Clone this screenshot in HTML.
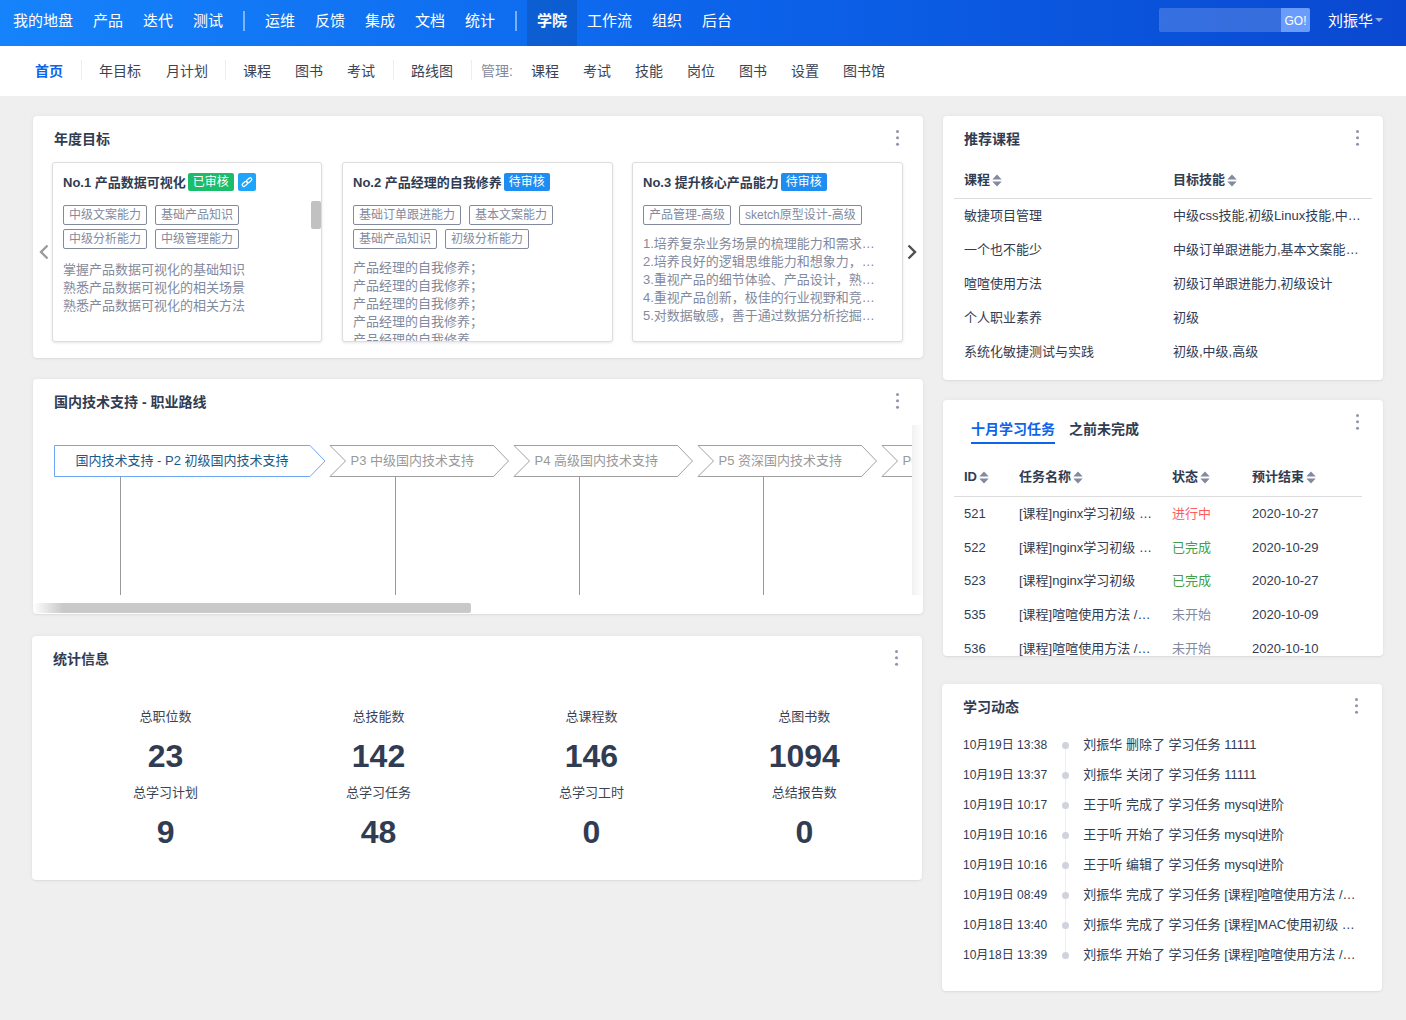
<!DOCTYPE html>
<html lang="zh-CN">
<head>
<meta charset="utf-8">
<title>学院 - 首页</title>
<style>
*{box-sizing:border-box;margin:0;padding:0}
html,body{width:1406px;height:1020px;overflow:hidden}
body{background:#efefef;font-family:"Liberation Sans","Noto Sans CJK SC",sans-serif;font-size:13px;color:#313c52;position:relative}
#topnav{position:absolute;left:0;top:0;width:1406px;height:46px;background:linear-gradient(90deg,#1583fb 0%,#0c64eb 50%,#0a48d1 100%);color:#fff;font-size:15px}
#topnav .it{position:absolute;top:0;height:46px;line-height:42px;padding:0 10px;white-space:nowrap}
#topnav .it.act{background:rgba(0,0,0,.12);font-weight:bold}
#topnav .dv{position:absolute;top:11px;width:2px;height:20px;background:rgba(255,255,255,.45)}
#search{position:absolute;left:1159px;top:8px;width:151px;height:24px;background:rgba(255,255,255,.18);border-radius:2px}
#search .go{position:absolute;right:0;top:0;width:29px;height:24px;background:#6a9cfb;color:#fff;font-size:12px;line-height:26px;text-align:center;border-radius:0 2px 2px 0}
#user{position:absolute;left:1328px;top:0;line-height:42px;font-size:15px;white-space:nowrap}
#user i{position:absolute;left:47px;top:18px;border:4px solid transparent;border-top:4px solid rgba(255,255,255,.55);width:0;height:0}
#subnav{position:absolute;left:0;top:46px;width:1406px;height:50px;background:#fff;font-size:14px;color:#3c4353}
#subnav .it{position:absolute;top:0;line-height:50px;white-space:nowrap}
#subnav .it.act{color:#0c64eb;font-weight:bold}
#subnav .lb{color:#838a9d}
#subnav .dv{position:absolute;top:14px;width:1px;height:20px;background:#eee}
.panel{position:absolute;background:#fff;border-radius:4px;box-shadow:0 1px 2px rgba(0,0,0,.06),0 0 5px rgba(0,0,0,.05)}
.panel .ttl{position:absolute;left:21px;top:13px;font-size:14px;font-weight:bold;line-height:20px;color:#313c52;white-space:nowrap}
.more{position:absolute;width:3.4px;height:3.4px;border-radius:50%;background:#9094ab;box-shadow:0 6.35px 0 #9094ab,0 12.7px 0 #9094ab}

.card{position:absolute;top:46px;width:270px;height:180px;border:1px solid #ddd;border-radius:3px;background:#fff;box-shadow:0 1px 3px rgba(0,0,0,.1);overflow:hidden}
.card .ct{position:absolute;left:10px;top:10px;font-size:13px;font-weight:bold;line-height:20px;white-space:nowrap;color:#313c52}
.badge{display:inline-block;vertical-align:top;height:18px;line-height:19px;margin-top:0px;padding:0 5px;font-size:12px;font-weight:normal;color:#fff;border-radius:2px;margin-left:2px}
.badge.g{background:#1bbd6a}
.badge.b{background:#1e8df2}
.badge.l{background:#1fa4fb;width:18px;padding:0;margin-left:4px;position:relative}
.tags{position:absolute;left:10px;top:42px;width:250px;font-size:0}
.tag{display:inline-block;height:20px;line-height:18px;border:1px solid #838a9d;border-radius:2px;padding:0 5px;font-size:12px;color:#838a9d;margin:0 8px 4px 0;white-space:nowrap}
.desc{position:absolute;left:10px;font-size:13px;line-height:18px;color:#838a9d;white-space:nowrap;width:232px}
.desc div{overflow:hidden;text-overflow:ellipsis}
.arw{position:absolute;top:127px}

.stat{position:absolute;width:200px;text-align:center;white-space:nowrap}
.stat .l{font-size:13px;line-height:20px;color:#3c4353}
.stat .n{font-size:32px;line-height:40px;font-weight:bold;color:#313c52}
.th{position:absolute;font-size:13px;font-weight:bold;line-height:20px;white-space:nowrap;color:#313c52}
.th svg{display:inline-block;vertical-align:top;margin:4px 0 0 2px}
.td{position:absolute;font-size:13px;line-height:20px;white-space:nowrap;overflow:hidden;text-overflow:ellipsis;color:#313c52}
.hr{position:absolute;height:1px;background:#ddd}
.tl-d{position:absolute;left:21px;font-size:12px;line-height:20px;white-space:nowrap;color:#313c52}
.tl-t{position:absolute;left:141.3px;width:273px;font-size:13px;line-height:20px;white-space:nowrap;overflow:hidden;text-overflow:ellipsis;color:#313c52}
.tl-o{position:absolute;left:120px;width:7px;height:7px;border-radius:50%;background:#d0d3de}
</style>
</head>
<body>
<div id="topnav">
<div class="it" style="left:3px">我的地盘</div>
<div class="it" style="left:83px">产品</div>
<div class="it" style="left:133px">迭代</div>
<div class="it" style="left:183px">测试</div>
<div class="dv" style="left:243px"></div>
<div class="it" style="left:255px">运维</div>
<div class="it" style="left:305px">反馈</div>
<div class="it" style="left:355px">集成</div>
<div class="it" style="left:405px">文档</div>
<div class="it" style="left:455px">统计</div>
<div class="dv" style="left:515px"></div>
<div class="it act" style="left:527px">学院</div>
<div class="it" style="left:577px">工作流</div>
<div class="it" style="left:642px">组织</div>
<div class="it" style="left:692px">后台</div>
<div id="search"><div class="go">GO!</div></div>
<div id="user">刘振华<i></i></div>
</div>
<div id="subnav">
<div class="it act" style="left:35px">首页</div>
<div class="dv" style="left:81px"></div>
<div class="it" style="left:99px">年目标</div>
<div class="it" style="left:166px">月计划</div>
<div class="dv" style="left:225px"></div>
<div class="it" style="left:243px">课程</div>
<div class="it" style="left:295px">图书</div>
<div class="it" style="left:347px">考试</div>
<div class="dv" style="left:393px"></div>
<div class="it" style="left:411px">路线图</div>
<div class="dv" style="left:471px"></div>
<div class="it lb" style="left:481px">管理:</div>
<div class="it" style="left:531px">课程</div>
<div class="it" style="left:583px">考试</div>
<div class="it" style="left:635px">技能</div>
<div class="it" style="left:687px">岗位</div>
<div class="it" style="left:739px">图书</div>
<div class="it" style="left:791px">设置</div>
<div class="it" style="left:843px">图书馆</div>
</div>

<div class="panel" id="p1" style="left:33px;top:116px;width:890px;height:242px"><div class="ttl">年度目标</div><div class="more" style="left:863.1px;top:14.1px"></div>
<svg class="arw" style="left:6px" width="10" height="18" viewBox="0 0 10 18"><path d="M8.5 2.5 L2 9 L8.5 15.5" fill="none" stroke="#9a9a9a" stroke-width="2.3"/></svg>
<svg class="arw" style="left:874px" width="10" height="18" viewBox="0 0 10 18"><path d="M1.5 2.5 L8 9 L1.5 15.5" fill="none" stroke="#505050" stroke-width="2.4"/></svg>
<div class="card" style="left:19px">
<div class="ct">No.1 产品数据可视化<span class="badge g">已审核</span><span class="badge l"><svg width="18" height="18" viewBox="0 0 18 18" style="position:absolute;left:0;top:0"><g fill="none" stroke="#fff" stroke-width="1.2" stroke-linecap="round"><rect x="3.9" y="9.3" width="6" height="3.2" rx="1.6" transform="rotate(-40 6.9 10.9)"/><rect x="8.1" y="5.7" width="6" height="3.2" rx="1.6" transform="rotate(-40 11.1 7.3)"/></g></svg></span></div>
<div class="tags"><span class="tag">中级文案能力</span><span class="tag">基础产品知识</span><span class="tag">中级分析能力</span><span class="tag">中级管理能力</span></div>
<div class="desc" style="top:98px"><div>掌握产品数据可视化的基础知识</div><div>熟悉产品数据可视化的相关场景</div><div>熟悉产品数据可视化的相关方法</div></div>
<div style="position:absolute;left:258px;top:38px;width:10px;height:28px;background:#c1c1c1;border-radius:2px"></div>
</div>
<div class="card" style="left:309px;width:271px">
<div class="ct">No.2 产品经理的自我修养<span class="badge b">待审核</span></div>
<div class="tags"><span class="tag">基础订单跟进能力</span><span class="tag">基本文案能力</span><span class="tag">基础产品知识</span><span class="tag">初级分析能力</span></div>
<div class="desc" style="top:96px"><div>产品经理的自我修养；</div><div>产品经理的自我修养；</div><div>产品经理的自我修养；</div><div>产品经理的自我修养；</div><div>产品经理的自我修养</div></div>
</div>
<div class="card" style="left:599px;width:271px">
<div class="ct">No.3 提升核心产品能力<span class="badge b">待审核</span></div>
<div class="tags"><span class="tag">产品管理-高级</span><span class="tag">sketch原型设计-高级</span></div>
<div class="desc" style="top:72px"><div>1.培养复杂业务场景的梳理能力和需求分析能力</div><div>2.培养良好的逻辑思维能力和想象力，具备产品规划</div><div>3.重视产品的细节体验、产品设计，熟悉交互</div><div>4.重视产品创新，极佳的行业视野和竞品分析</div><div>5.对数据敏感，善于通过数据分析挖掘用户需求</div></div>
</div>
</div>
<div class="panel" id="p2" style="left:33px;top:379px;width:890px;height:235px"><div class="ttl">国内技术支持 - 职业路线</div><div class="more" style="left:863.1px;top:14.1px"></div>
<svg style="position:absolute;left:0;top:0" width="879" height="235" viewBox="0 0 879 235" font-family="'Liberation Sans','Noto Sans CJK SC',sans-serif" font-size="13"><path d="M21.5 66.5 H277 L292 82.0 L277 97.5 H21.5 Z" fill="#fff" stroke="#6ea6f8" stroke-width="1"/><text x="42.5" y="85.9" fill="#1b5a86">国内技术支持 - P2 初级国内技术支持</text><path d="M87.5 97.5 V216" stroke="#999" stroke-width="1"/><path d="M297 66.5 H460.5 L475.5 82.0 L460.5 97.5 H297 L312.5 82.0 Z" fill="#fff" stroke="#a0a0a0" stroke-width="1"/><text x="317.5" y="85.9" fill="#999">P3 中级国内技术支持</text><path d="M362.5 97.5 V216" stroke="#999" stroke-width="1"/><path d="M481 66.5 H644.5 L659.5 82.0 L644.5 97.5 H481 L496.5 82.0 Z" fill="#fff" stroke="#a0a0a0" stroke-width="1"/><text x="501.5" y="85.9" fill="#999">P4 高级国内技术支持</text><path d="M546.5 97.5 V216" stroke="#999" stroke-width="1"/><path d="M665 66.5 H828.5 L843.5 82.0 L828.5 97.5 H665 L680.5 82.0 Z" fill="#fff" stroke="#a0a0a0" stroke-width="1"/><text x="685.5" y="85.9" fill="#999">P5 资深国内技术支持</text><path d="M730.5 97.5 V216" stroke="#999" stroke-width="1"/><path d="M849 66.5 H1012.5 L1027.5 82.0 L1012.5 97.5 H849 L864.5 82.0 Z" fill="#fff" stroke="#a0a0a0" stroke-width="1"/><text x="869.5" y="85.9" fill="#999">P6 专家国内技术支持</text></svg>
<div style="position:absolute;left:879px;top:46px;width:11px;height:170px;background:linear-gradient(90deg,#f0f0f0 0,#f5f5f5 3px,#fafafa 7px,#fff 100%);border-radius:1px 0 0 0"></div>
<div style="position:absolute;left:0;top:224px;width:438px;height:10px;background:linear-gradient(90deg,#fff 0,#c9c9c9 30px,#c9c9c9 100%);border-radius:0 2px 2px 4px"></div>
</div>
<div class="panel" id="p3" style="left:32px;top:636px;width:890px;height:244px"><div class="ttl">统计信息</div><div class="more" style="left:863.1px;top:14.1px"></div>
<div class="stat" style="left:33.6px;top:70.6px"><div class="l">总职位数</div><div class="n" style="margin-top:9.4px">23</div></div>
<div class="stat" style="left:246.5px;top:70.6px"><div class="l">总技能数</div><div class="n" style="margin-top:9.4px">142</div></div>
<div class="stat" style="left:459.4px;top:70.6px"><div class="l">总课程数</div><div class="n" style="margin-top:9.4px">146</div></div>
<div class="stat" style="left:672.3px;top:70.6px"><div class="l">总图书数</div><div class="n" style="margin-top:9.4px">1094</div></div>
<div class="stat" style="left:33.6px;top:146.6px"><div class="l">总学习计划</div><div class="n" style="margin-top:9.4px">9</div></div>
<div class="stat" style="left:246.5px;top:146.6px"><div class="l">总学习任务</div><div class="n" style="margin-top:9.4px">48</div></div>
<div class="stat" style="left:459.4px;top:146.6px"><div class="l">总学习工时</div><div class="n" style="margin-top:9.4px">0</div></div>
<div class="stat" style="left:672.3px;top:146.6px"><div class="l">总结报告数</div><div class="n" style="margin-top:9.4px">0</div></div></div>
<div class="panel" id="p4" style="left:943px;top:116px;width:440px;height:264px"><div class="ttl">推荐课程</div><div class="more" style="left:412.9px;top:14.1px"></div>
<div class="th" style="left:21px;top:53.5px">课程<svg width="10" height="13" viewBox="0 0 10 13"><path d="M5 0.4 L9.7 5.5 H0.3 Z M5 12.6 L9.7 7.5 H0.3 Z" fill="#838a9d"/></svg></div>
<div class="th" style="left:230px;top:53.5px">目标技能<svg width="10" height="13" viewBox="0 0 10 13"><path d="M5 0.4 L9.7 5.5 H0.3 Z M5 12.6 L9.7 7.5 H0.3 Z" fill="#838a9d"/></svg></div>
<div class="hr" style="left:11px;top:82px;width:418px"></div>
<div class="td" style="left:21px;top:90px;width:200px">敏捷项目管理</div><div class="td" style="left:230px;top:90px;width:189px">中级css技能,初级Linux技能,中级订单跟进能力</div>
<div class="td" style="left:21px;top:124px;width:200px">一个也不能少</div><div class="td" style="left:230px;top:124px;width:189px">中级订单跟进能力,基本文案能力,基础产品知识</div>
<div class="td" style="left:21px;top:158px;width:200px">喧喧使用方法</div><div class="td" style="left:230px;top:158px;width:189px">初级订单跟进能力,初级设计</div>
<div class="td" style="left:21px;top:192px;width:200px">个人职业素养</div><div class="td" style="left:230px;top:192px;width:189px">初级</div>
<div class="td" style="left:21px;top:226px;width:200px">系统化敏捷测试与实践</div><div class="td" style="left:230px;top:226px;width:189px">初级,中级,高级</div></div>
<div class="panel" id="p5" style="left:943px;top:400px;width:440px;height:256px"><div class="more" style="left:412.9px;top:13.8px"></div>
<div style="position:absolute;left:28px;top:19px;font-size:14px;font-weight:bold;line-height:20px;color:#0c64eb;white-space:nowrap">十月学习任务</div>
<div style="position:absolute;left:28px;top:42px;width:84px;height:2px;background:#0c64eb"></div>
<div style="position:absolute;left:126px;top:19px;font-size:14px;font-weight:bold;line-height:20px;color:#313c52;white-space:nowrap">之前未完成</div>
<div class="th" style="left:21px;top:67px">ID<svg width="10" height="13" viewBox="0 0 10 13"><path d="M5 0.4 L9.7 5.5 H0.3 Z M5 12.6 L9.7 7.5 H0.3 Z" fill="#838a9d"/></svg></div>
<div class="th" style="left:76px;top:67px">任务名称<svg width="10" height="13" viewBox="0 0 10 13"><path d="M5 0.4 L9.7 5.5 H0.3 Z M5 12.6 L9.7 7.5 H0.3 Z" fill="#838a9d"/></svg></div>
<div class="th" style="left:229px;top:67px">状态<svg width="10" height="13" viewBox="0 0 10 13"><path d="M5 0.4 L9.7 5.5 H0.3 Z M5 12.6 L9.7 7.5 H0.3 Z" fill="#838a9d"/></svg></div>
<div class="th" style="left:309px;top:67px">预计结束<svg width="10" height="13" viewBox="0 0 10 13"><path d="M5 0.4 L9.7 5.5 H0.3 Z M5 12.6 L9.7 7.5 H0.3 Z" fill="#838a9d"/></svg></div>
<div class="hr" style="left:11px;top:96px;width:408px"></div>
<div style="position:absolute;left:0;top:100px;width:440px;height:156px;overflow:hidden">
<div class="td" style="left:21px;top:3.6px">521</div><div class="td" style="left:76px;top:3.6px;width:133px">[课程]nginx学习初级 / 第一章</div><div class="td" style="left:229px;top:3.6px;color:#ff5d5d">进行中</div><div class="td" style="left:309px;top:3.6px">2020-10-27</div>
<div class="td" style="left:21px;top:37.5px">522</div><div class="td" style="left:76px;top:37.5px;width:133px">[课程]nginx学习初级 / 第二章</div><div class="td" style="left:229px;top:37.5px;color:#43a047">已完成</div><div class="td" style="left:309px;top:37.5px">2020-10-29</div>
<div class="td" style="left:21px;top:71.3px">523</div><div class="td" style="left:76px;top:71.3px;width:133px">[课程]nginx学习初级</div><div class="td" style="left:229px;top:71.3px;color:#43a047">已完成</div><div class="td" style="left:309px;top:71.3px">2020-10-27</div>
<div class="td" style="left:21px;top:105.2px">535</div><div class="td" style="left:76px;top:105.2px;width:133px">[课程]喧喧使用方法 / 安装部署</div><div class="td" style="left:229px;top:105.2px;color:#838a9d">未开始</div><div class="td" style="left:309px;top:105.2px">2020-10-09</div>
<div class="td" style="left:21px;top:139.0px">536</div><div class="td" style="left:76px;top:139.0px;width:133px">[课程]喧喧使用方法 / 客户端使用</div><div class="td" style="left:229px;top:139.0px;color:#838a9d">未开始</div><div class="td" style="left:309px;top:139.0px">2020-10-10</div>
</div></div>
<div class="panel" id="p6" style="left:942px;top:684px;width:440px;height:307px"><div class="ttl">学习动态</div><div class="more" style="left:412.9px;top:14.1px"></div>
<div style="position:absolute;left:123px;top:61px;width:1px;height:210px;background:#eee"></div>
<div class="tl-d" style="top:51.0px">10月19日 13:38</div><div class="tl-o" style="top:58.0px"></div><div class="tl-t" style="top:51.0px">刘振华 删除了 学习任务 11111</div>
<div class="tl-d" style="top:81.0px">10月19日 13:37</div><div class="tl-o" style="top:88.0px"></div><div class="tl-t" style="top:81.0px">刘振华 关闭了 学习任务 11111</div>
<div class="tl-d" style="top:110.9px">10月19日 10:17</div><div class="tl-o" style="top:117.9px"></div><div class="tl-t" style="top:110.9px">王于听 完成了 学习任务 mysql进阶</div>
<div class="tl-d" style="top:140.8px">10月19日 10:16</div><div class="tl-o" style="top:147.8px"></div><div class="tl-t" style="top:140.8px">王于听 开始了 学习任务 mysql进阶</div>
<div class="tl-d" style="top:170.8px">10月19日 10:16</div><div class="tl-o" style="top:177.8px"></div><div class="tl-t" style="top:170.8px">王于听 编辑了 学习任务 mysql进阶</div>
<div class="tl-d" style="top:200.8px">10月19日 08:49</div><div class="tl-o" style="top:207.8px"></div><div class="tl-t" style="top:200.8px">刘振华 完成了 学习任务 [课程]喧喧使用方法 / 安装部署</div>
<div class="tl-d" style="top:230.7px">10月18日 13:40</div><div class="tl-o" style="top:237.7px"></div><div class="tl-t" style="top:230.7px">刘振华 完成了 学习任务 [课程]MAC使用初级 / 基础操作</div>
<div class="tl-d" style="top:260.6px">10月18日 13:39</div><div class="tl-o" style="top:267.6px"></div><div class="tl-t" style="top:260.6px">刘振华 开始了 学习任务 [课程]喧喧使用方法 / 安装部署</div></div>
</body>
</html>
